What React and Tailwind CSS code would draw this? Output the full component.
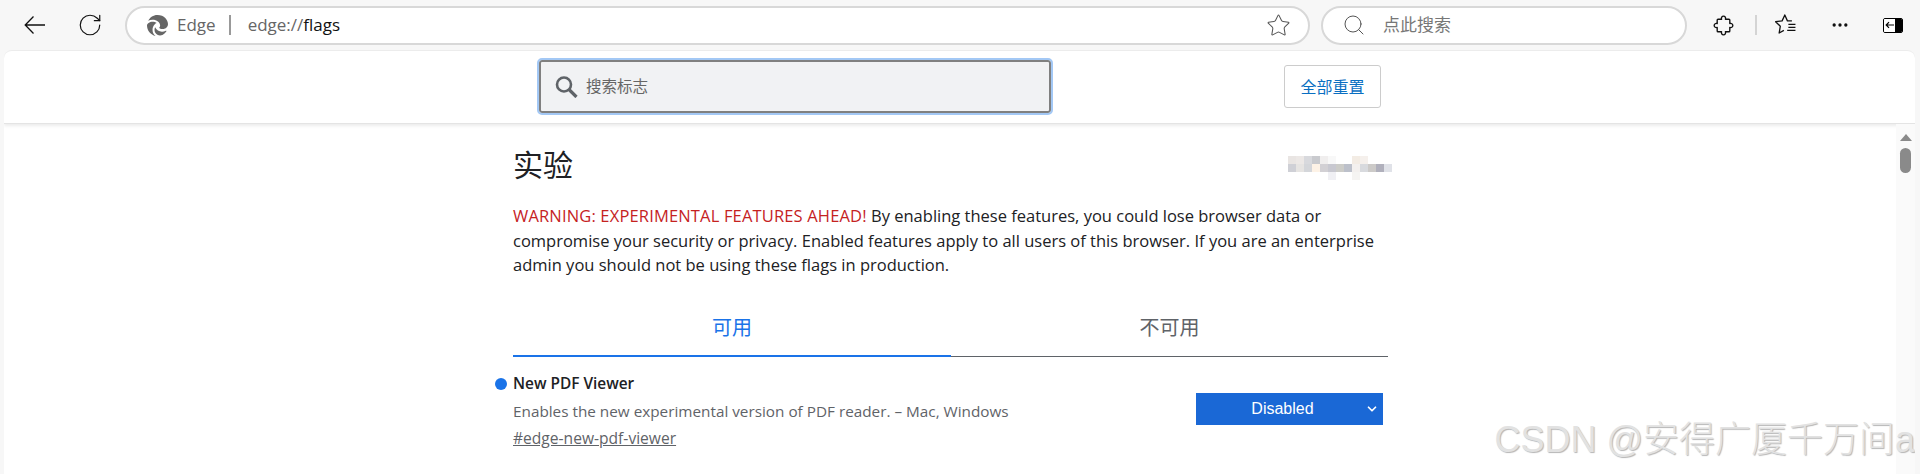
import React from 'react';
import { RotateCw, Search, Star, MoreHorizontal, ChevronDown } from 'lucide-react';
import { FaEdge } from 'react-icons/fa6';

const cjk = "font-['Open_Sans','Noto_Sans_CJK_SC',sans-serif]";

const BackIcon = () => (
    <svg width="22" height="20" viewBox="0 0 22 20" fill="none" stroke="#111" strokeWidth="1.3">
        <path d="M21 10H1.500M9.500 1.500L1.200 10l8.300 8.500" />
    </svg>
);

const ExtensionsIcon = () => (
    <svg width="21" height="21" viewBox="0 0 20 20" fill="none" stroke="#111" strokeWidth="1.3" strokeLinejoin="round">
        <path d="M8.200 4a2 2 0 1 1 3.600 0h3.400c.5 0 .8.300.8.800v3.400a2 2 0 1 1 0 3.600v3.400c0 .5-.3.8-.8.8h-3.400a2 2 0 1 1-3.600 0H4.800c-.5 0-.8-.3-.8-.8v-3.400a2 2 0 1 1 0-3.600V4.800c0-.5.300-.8.800-.8z" />
    </svg>
);

const FavoritesIcon = () => (
    <svg width="26" height="26" viewBox="0 0 22 22" fill="none" stroke="#111" strokeWidth="1.1" strokeLinejoin="round">
        <path d="M16 7.500h-3.800L10 2.500 7.700 7.500l-5.500.7 4 3.800-1 5.800 4-2.200" />
        <path d="M13 10.500h6M13 13h6M12 15.500h7" />
    </svg>
);

const SidebarIcon = () => (
    <div className="flex h-[15px] w-[20px] overflow-hidden rounded-[2px] border border-black">
        <div className="flex flex-1 items-center justify-center bg-white">
            <svg width="10" height="8" viewBox="0 0 10 8" fill="none" stroke="#000" strokeWidth="1.2">
                <path d="M9 4H1.500M4 1.200L1.200 4 4 6.800" />
            </svg>
        </div>
        <div className="w-[7px] bg-black" />
    </div>
);

const FlagSearchIcon = () => (
    <svg width="23" height="22" viewBox="0 0 23 22" fill="none" stroke="#5f6368">
        <circle cx="9" cy="8.500" r="7" strokeWidth="2.600" />
        <path d="M14 13.500L21.500 21" strokeWidth="3.200" />
    </svg>
);

const mosaic = [
    ['bg-[#e9e5e3]', 'bg-[#ece8e6]', 'bg-[#d8d9dd]', 'bg-[#c9cace]', 'bg-[#f0eeee]', 'bg-[#f8f8f8]', 'bg-white', 'bg-white', 'bg-[#f3ece4]', 'bg-[#f5f0ec]', 'bg-white', 'bg-white', 'bg-white'],
    ['bg-[#cfd0d6]', 'bg-[#e6e4e2]', 'bg-[#d4d6da]', 'bg-[#fdf2e6]', 'bg-[#d2d0d4]', 'bg-[#c8c8d0]', 'bg-[#ccccc8]', 'bg-[#bcc0ca]', 'bg-[#f3f0ee]', 'bg-[#d8dade]', 'bg-[#cccac8]', 'bg-[#b0b0bc]', 'bg-[#e0e2e8]'],
    ['bg-white', 'bg-white', 'bg-white', 'bg-white', 'bg-white', 'bg-[#f0f0f4]', 'bg-white', 'bg-white', 'bg-[#f5f4f2]', 'bg-white', 'bg-white', 'bg-white', 'bg-white'],
];

const App = () => {
    return (
        <div className={`flex h-[474px] w-[1920px] flex-col overflow-hidden bg-[#f7f7f7] ${cjk}`}>
            {/* browser toolbar */}
            <div className="flex h-[50px] shrink-0 items-center">
                <div className="flex w-[125px] shrink-0 items-center pl-[24px]">
                    <BackIcon />
                    <RotateCw size={26} strokeWidth={1.1} className="ml-[31px] text-[#111]" />
                </div>
                <div className="flex h-[39px] w-[1185px] shrink-0 items-center rounded-full border-2 border-[#d8d8d8] bg-white pl-[20px] pr-[17px]">
                    <FaEdge size={21} className="text-[#666]" />
                    <span className="ml-[9px] text-[17px] text-[#666]">Edge</span>
                    <div className="ml-[13px] h-[20px] w-[2px] bg-[#999]" />
                    <span className="ml-[17px] text-[17px] text-[#666]">edge://<span className="text-[#111]">flags</span></span>
                    <Star size={25} strokeWidth={1} className="ml-auto text-[#555]" />
                </div>
                <div className="ml-[11px] flex h-[39px] w-[366px] shrink-0 items-center rounded-full border-2 border-[#d8d8d8] bg-white pl-[19px]">
                    <Search size={24} strokeWidth={1} className="text-[#555]" />
                    <span className="ml-[17px] text-[17px] text-[#777]">点此搜索</span>
                </div>
                <div className="flex flex-1 items-center">
                    <div className="ml-[26px]"><ExtensionsIcon /></div>
                    <div className="ml-[21px] h-[20px] w-[2px] bg-[#d4d4d4]" />
                    <div className="ml-[16px]"><FavoritesIcon /></div>
                    <MoreHorizontal size={20} strokeWidth={2} className="ml-[31px] text-[#111]" />
                    <div className="ml-[33px]"><SidebarIcon /></div>
                </div>
            </div>

            {/* page */}
            <div className="ml-[4px] mr-[5px] flex flex-1 flex-col overflow-hidden rounded-t-[8px] border-t border-[#ececec] bg-white">
                <div className="flex h-[73px] shrink-0 items-start border-b border-[#e4e4e4] shadow-[0_2px_3px_rgba(0,0,0,0.08)]">
                    <div className="ml-[535px] mt-[9px] flex h-[53px] w-[512px] items-center rounded-[3px] border-2 border-[#808080] bg-[#f1f2f4] pl-[14px] outline-2 outline-[#a3c8f5]">
                        <FlagSearchIcon />
                        <span className="ml-[8px] text-[15.5px] text-[#666]">搜索标志</span>
                    </div>
                    <button className="ml-[233px] mt-[14px] h-[43px] w-[97px] rounded-[3px] border border-[#ccc] bg-white text-[16px] text-[#0a6fc2]">全部重置</button>
                </div>

                <div className="flex flex-1 overflow-hidden">
                    <div className="relative flex-1">
                        <div className="ml-[509px] w-[875px]">
                            <div className="mt-[22px] flex h-[38px] items-start justify-between">
                                <h1 className="text-[30px] leading-[38px] text-[#202124]">实验</h1>
                                <div className="mr-[-4px] mt-[10px] flex flex-col">
                                    {mosaic.map((row, i) => (
                                        <div key={i} className="flex h-[8px]">
                                            {row.map((cell, j) => <div key={j} className={`h-[8px] w-[8px] ${cell}`} />)}
                                        </div>
                                    ))}
                                </div>
                            </div>
                            <p className="mt-[20px] w-[875px] text-[16.5px] leading-[24.5px] text-[#202124]">
                                <span className="tracking-[0.16px] text-[#c5221f]">WARNING: EXPERIMENTAL FEATURES AHEAD!</span> By enabling these features, you could lose browser data or<br />compromise your security or privacy. Enabled features apply to all users of this browser. If you are an enterprise<br />admin you should not be using these flags in production.
                            </p>
                            <div className="mt-[29px] flex h-[50px]">
                                <div className="flex w-[438px] items-center justify-center border-b-2 border-[#1a73e8] pb-[6px] text-[20px] text-[#1a73e8]">可用</div>
                                <div className="flex w-[437px] items-center justify-center border-b border-[#5f6368] pb-[6px] text-[20px] text-[#5f6368]">不可用</div>
                            </div>
                            <div className="mt-[16px] flex justify-between">
                                <div className="relative">
                                    <div className="absolute left-[-18px] top-[5px] h-[12px] w-[12px] rounded-full bg-[#1a73e8]" />
                                    <div className="text-[15.4px] font-semibold leading-[22px] text-[#202124]">New PDF Viewer</div>
                                    <div className="mt-[6px] text-[15.3px] leading-[20px] text-[#5f6368]">Enables the new experimental version of PDF reader. – Mac, Windows</div>
                                    <a className="mt-[7px] block text-[15.6px] leading-[20px] text-[#5f6368] underline">#edge-new-pdf-viewer</a>
                                </div>
                                <div className="mr-[5px] mt-[20px] flex h-[32px] w-[187px] items-center bg-[#1a68d6] font-['Liberation_Sans',sans-serif] text-[16px] text-white">
                                    <span className="flex-1 pl-[4px] text-center">Disabled</span>
                                    <ChevronDown size={14} strokeWidth={3} className="mr-[4px]" />
                                </div>
                            </div>
                        </div>
                        {/* CSDN watermark */}
                        <div className="absolute right-[-19px] top-[297px] whitespace-nowrap font-['Liberation_Sans','Noto_Sans_CJK_SC',sans-serif] text-[36px] font-light leading-[38px] text-[#e2e2e2] [text-shadow:1px_1px_1px_#b5b5b5]">
                            CSDN @安得广厦千万间a
                        </div>
                    </div>
                    {/* scrollbar */}
                    <div className="flex w-[19px] shrink-0 flex-col items-center bg-[#fafafa] pt-[10px]">
                        <div className="h-0 w-0 border-x-[6px] border-b-[7px] border-x-transparent border-b-[#8a8a8a]" />
                        <div className="mt-[7px] h-[25px] w-[11px] rounded-full bg-[#8a8a8a]" />
                    </div>
                </div>
            </div>
        </div>
    );
};

export default App;
